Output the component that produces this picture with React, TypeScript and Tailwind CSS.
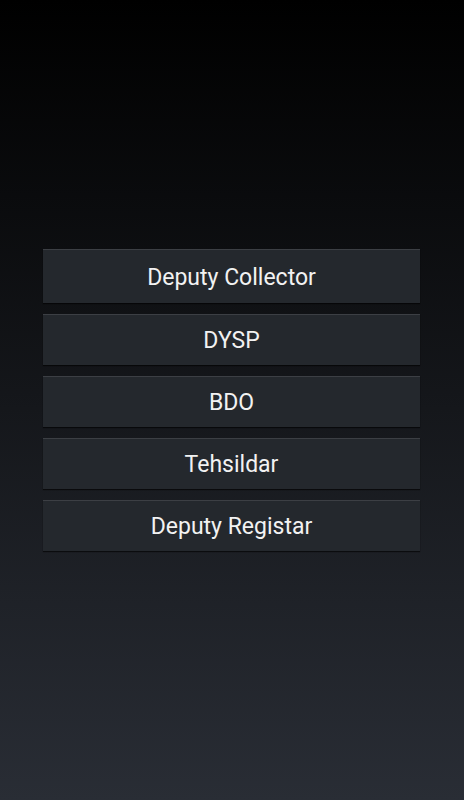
const items = ['Deputy Collector', 'DYSP', 'BDO', 'Tehsildar', 'Deputy Registar'];

export default function App() {
  return (
    <div
      className="w-[464px] h-[800px] bg-[linear-gradient(to_bottom,#000000,#292d35)] flex flex-col pt-[249px] px-[43px] gap-[11px]"
      style={{ fontFamily: 'Roboto, "Noto Sans", sans-serif' }}
    >
      {items.map((label, i) => (
        <button
          key={label}
          className={`w-[377px] ${i === 0 ? 'h-[54px]' : 'h-[51px]'} pt-[3px] bg-[#24282d] border-t border-[#3c3f44] shadow-[0_1px_1px_rgba(0,0,0,0.6)] text-[23px] text-[#f2f2f2] flex items-center justify-center`}
        >
          {label}
        </button>
      ))}
    </div>
  );
}
